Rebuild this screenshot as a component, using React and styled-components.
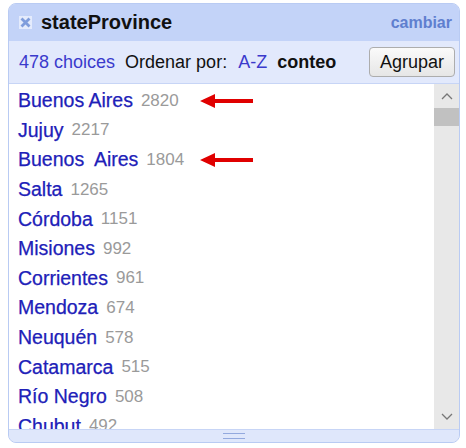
import React from 'react'
import styled, { createGlobalStyle } from 'styled-components'

const Global = createGlobalStyle`
  body {
    margin: 0;
    background: #fff;
    font-family: "Liberation Sans", Arial, sans-serif;
  }
`

const Panel = styled.div`
  margin: 3px 0 0 8px;
  width: 452px;
  height: 440px;
  box-sizing: border-box;
  border: 1px solid #b9cbf3;
  border-radius: 8px;
  overflow: hidden;
  background: #dfe7fb;
  display: flex;
  flex-direction: column;
`

const Header = styled.div`
  height: 37px;
  flex-shrink: 0;
  background: #c3d3f8;
  display: flex;
  align-items: center;
  padding: 0 7px 0 10px;
`

const Close = styled.span`
  width: 13px;
  height: 13px;
  background: #e4ebfc;
  display: flex;
  align-items: center;
  justify-content: center;
  margin-right: 9px;
`

const Title = styled.span`
  font-weight: bold;
  font-size: 20px;
  color: #111;
  flex: 1;
`

const Change = styled.span`
  font-weight: bold;
  font-size: 16px;
  color: #5f7fcf;
`

const Controls = styled.div`
  height: 42px;
  flex-shrink: 0;
  background: #e2e9fc;
  border-bottom: 1px solid #c7d5f6;
  display: flex;
  align-items: center;
  padding: 0 4px 0 10px;
  font-size: 18px;
`

const Link = styled.span`
  color: ${p => (p.$bold ? '#111' : '#3a3acc')};
  font-weight: ${p => (p.$bold ? 'bold' : 'normal')};
  margin-right: ${p => p.$gap || 10}px;
`

const Label = styled.span`
  color: #111;
  margin-right: 11px;
`

const Button = styled.button`
  margin-left: auto;
  width: 86px;
  height: 30px;
  font-family: inherit;
  font-size: 18px;
  color: #111;
  background: linear-gradient(#fafafa, #e6e6e6);
  border: 1px solid #adadad;
  border-radius: 4px;
  padding: 0;
`

const Body = styled.div`
  flex: 1;
  background: #fff;
  display: flex;
  overflow: hidden;
`

const List = styled.div`
  flex: 1;
  position: relative;
  padding-top: 2px;
`

const Row = styled.div`
  height: 29.6px;
  display: flex;
  align-items: center;
  padding-left: 9px;
  position: relative;
  white-space: pre;
`

const Name = styled.span`
  font-size: 19.5px;
  color: #2020b8;
  -webkit-text-stroke: 0.25px #2020b8;
`

const Count = styled.span`
  font-size: 17px;
  color: #9a9a9a;
  margin-left: 8px;
`

const Arrow = styled.svg`
  position: absolute;
  left: 191px;
  top: 50%;
  margin-top: -7px;
`

const Scroll = styled.div`
  width: 25px;
  background: #e8e8e8;
  display: flex;
  flex-direction: column;
  align-items: center;
`

const ScrollBtn = styled.div`
  height: 24px;
  width: 100%;
  display: flex;
  align-items: center;
  justify-content: center;
`

const Thumb = styled.div`
  width: 100%;
  height: 18px;
  background: #c1c1c1;
`

const Track = styled.div`
  flex: 1;
`

const Footer = styled.div`
  height: 12px;
  flex-shrink: 0;
  background: #dfe7fb;
  border-top: 1px solid #c7d5f6;
  display: flex;
  align-items: center;
  justify-content: center;
`

const Grip = styled.div`
  width: 22px;
  height: 4px;
  border-top: 1px solid #93a9de;
  border-bottom: 1px solid #93a9de;
`

const rows = [
  ['Buenos Aires', 2820, true],
  ['Jujuy', 2217],
  ['Buenos  Aires', 1804, true],
  ['Salta', 1265],
  ['Córdoba', 1151],
  ['Misiones', 992],
  ['Corrientes', 961],
  ['Mendoza', 674],
  ['Neuquén', 578],
  ['Catamarca', 515],
  ['Río Negro', 508],
  ['Chubut', 492],
]

const RedArrow = () => (
  <Arrow width="54" height="14" viewBox="0 0 54 14">
    <polygon points="0,7 15,0 15,5 53,5 53,9 15,9 15,14" fill="#e00000" />
  </Arrow>
)

const Chevron = ({ up }) => (
  <svg width="12" height="8" viewBox="0 0 12 8">
    <polyline
      points={up ? '1,7 6,2 11,7' : '1,1 6,6 11,1'}
      fill="none"
      stroke="#777"
      strokeWidth="1.3"
    />
  </svg>
)

const App = () => (
  <>
    <Global />
    <Panel>
      <Header>
        <Close>
          <svg width="11" height="11" viewBox="0 0 11 11">
            <path d="M1.5 1.5 L9.5 9.5 M9.5 1.5 L1.5 9.5" stroke="#7f9ddc" strokeWidth="2.8" />
          </svg>
        </Close>
        <Title>stateProvince</Title>
        <Change>cambiar</Change>
      </Header>
      <Controls>
        <Link>478 choices</Link>
        <Label>Ordenar por:</Label>
        <Link>A-Z</Link>
        <Link $bold>conteo</Link>
        <Button>Agrupar</Button>
      </Controls>
      <Body>
        <List>
          {rows.map(([name, count, mark]) => (
            <Row key={name}>
              <Name>{name}</Name>
              <Count>{count}</Count>
              {mark && <RedArrow />}
            </Row>
          ))}
        </List>
        <Scroll>
          <ScrollBtn><Chevron up /></ScrollBtn>
          <Thumb />
          <Track />
          <ScrollBtn><Chevron /></ScrollBtn>
        </Scroll>
      </Body>
      <Footer>
        <Grip />
      </Footer>
    </Panel>
  </>
)

export default App
